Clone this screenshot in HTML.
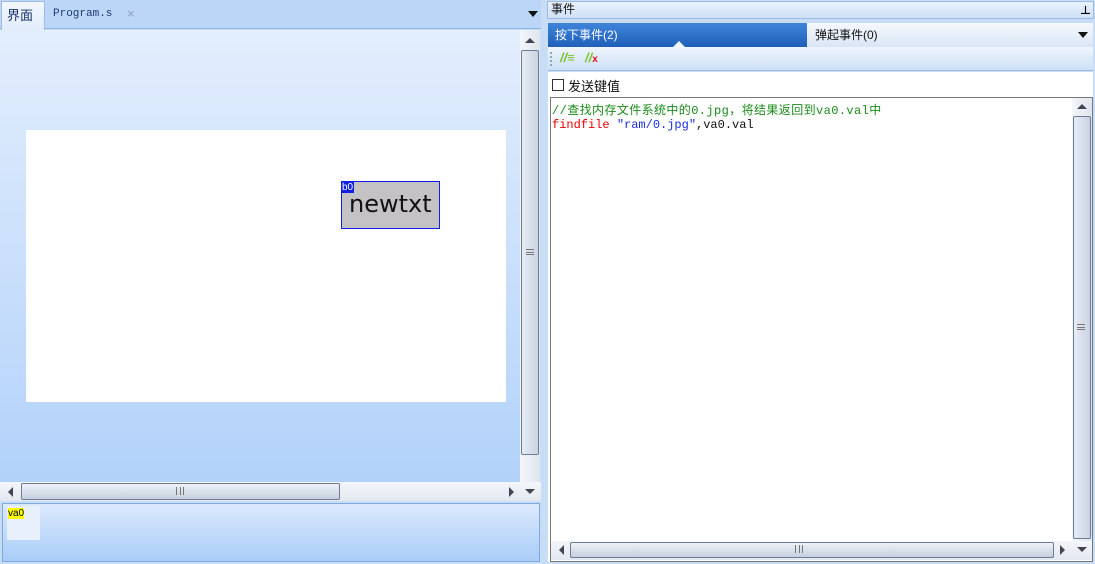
<!DOCTYPE html>
<html><head><meta charset="utf-8"><style>
*{margin:0;padding:0;box-sizing:border-box}
body{width:1095px;height:564px;overflow:hidden;background:#c7dcf5;font-family:"Liberation Sans","Noto Sans CJK SC",sans-serif;font-size:12px;position:relative}
.a{position:absolute}
.sb{background:linear-gradient(90deg,#f4f6fa,#dfe5ee);}
.thumbv{background:linear-gradient(90deg,#e8edf5,#c9d3e2);border:1px solid #6f7c96;border-radius:2px}
.thumbh{background:linear-gradient(#eef2f8,#c5cfdd);border:1px solid #6f7c96;border-radius:2px}
.mono{font-family:"Liberation Mono","Noto Sans CJK SC",monospace;font-size:12px}
</style></head><body>
<div class="a" style="left:0;top:0;width:541px;height:29px;background:#bcd6f8;border-bottom:1px solid #8fb4e0"></div>
<div class="a" style="left:1px;top:1px;width:44px;height:29px;background:linear-gradient(#f2f7fe,#e2edfc);border:1px solid #9ebee6;border-bottom:none;color:#15306a;font-size:13px;padding:3px 0 0 5px">界面</div>
<div class="a mono" style="left:53px;top:8px;color:#1c3a72;font-size:11px">Program.s</div>
<div class="a" style="left:127px;top:6px;color:#8aa0c0;font-size:13px">×</div>
<div class="a" style="left:528px;top:11px;border-left:5px solid transparent;border-right:5px solid transparent;border-top:6px solid #111"></div>
<div class="a" style="left:0;top:30px;width:520px;height:452px;background:linear-gradient(#e3eefd,#b2d2fa)"></div>
<div class="a" style="left:26px;top:130px;width:480px;height:272px;background:#fff"></div>
<div class="a" style="left:341px;top:181px;width:99px;height:48px;background:#c4c2c4;border:1px solid #1020e0"></div>
<div class="a" style="left:342px;top:182px;width:12px;height:11px;background:#1020e0;color:#fff;font-size:10px;line-height:11px">b0</div>
<div class="a" style="left:349px;top:190px;font-family:'DejaVu Sans',sans-serif;font-size:24px;color:#111">newtxt</div>
<div class="a sb" style="left:520px;top:30px;width:20px;height:452px"></div>
<div class="a" style="left:525px;top:38px;border-left:5px solid transparent;border-right:5px solid transparent;border-bottom:5px solid #445"></div>
<div class="a thumbv" style="left:521px;top:50px;width:18px;height:405px"></div>
<div class="a" style="left:526px;top:249px;width:8px;height:6px;border-top:1px solid #777;border-bottom:1px solid #777"></div>
<div class="a" style="left:526px;top:252px;width:8px;height:1px;background:#777"></div>
<div class="a" style="left:0;top:482px;width:541px;height:19px;background:linear-gradient(#f4f6fa,#e3e8f0)"></div>
<div class="a" style="left:8px;top:487px;border-top:5px solid transparent;border-bottom:5px solid transparent;border-right:5px solid #445"></div>
<div class="a thumbh" style="left:21px;top:483px;width:319px;height:17px"></div>
<div class="a" style="left:176px;top:487px;width:8px;height:8px;border-left:1px solid #777;border-right:1px solid #777"></div>
<div class="a" style="left:180px;top:487px;width:1px;height:8px;background:#777"></div>
<div class="a" style="left:509px;top:487px;border-top:5px solid transparent;border-bottom:5px solid transparent;border-left:5px solid #445"></div>
<div class="a" style="left:525px;top:489px;border-left:5px solid transparent;border-right:5px solid transparent;border-top:5px solid #445"></div>
<div class="a" style="left:2px;top:503px;width:538px;height:59px;background:linear-gradient(#dce9fc,#a9cdf8);border:1px solid #7fa8dc"></div>
<div class="a" style="left:7px;top:506px;width:33px;height:34px;background:#e8f0fc"></div>
<div class="a" style="left:8px;top:508px;background:#ff0;font-size:10px;line-height:11px;color:#000">va0</div>
<div class="a" style="left:546px;top:0;width:549px;height:564px;background:#c9ddf6"></div>
<div class="a" style="left:547px;top:1px;width:547px;height:18px;background:linear-gradient(#eaf2fd,#cfe0f7);border:1px solid #9dbbe2;padding:0 0 0 3px;font-size:12px;line-height:15px;color:#111">事件</div>
<div class="a" style="left:1080px;top:2px;font-size:11px;font-weight:bold">⊥</div>
<div class="a" style="left:548px;top:23px;width:259px;height:24px;background:linear-gradient(#3f84da,#1f5fb8);color:#fff;font-size:12px;padding:3px 0 0 7px">按下事件(2)</div>
<div class="a" style="left:673px;top:41px;border-left:6px solid transparent;border-right:6px solid transparent;border-bottom:6px solid #f2f6fc"></div>
<div class="a" style="left:807px;top:23px;width:286px;height:24px;background:linear-gradient(#f6f9fd,#d9e6f6);color:#111;font-size:12px;padding:3px 0 0 8px">弹起事件(0)</div>
<div class="a" style="left:1078px;top:32px;border-left:5px solid transparent;border-right:5px solid transparent;border-top:6px solid #111"></div>
<div class="a" style="left:548px;top:47px;width:545px;height:24px;background:linear-gradient(#f0f5fc,#cde0f8);border-bottom:1px solid #9dbbe2"></div>
<div class="a" style="left:550px;top:52px;width:2px;height:14px;border-left:2px dotted #8aa"></div>
<div class="a" style="left:560px;top:50px;color:#7cbf2a;font-size:13px;font-style:italic;font-weight:bold">//≡</div>
<div class="a" style="left:585px;top:50px;color:#7cbf2a;font-size:13px;font-style:italic;font-weight:bold">//<span style="color:#d11;font-size:10px;font-style:normal">x</span></div>
<div class="a" style="left:548px;top:72px;width:545px;height:490px;background:#fff"></div>
<div class="a" style="left:552px;top:79px;width:12px;height:12px;border:1px solid #333;background:#fff"></div>
<div class="a" style="left:568px;top:76px;font-size:13px;color:#111">发送键值</div>
<div class="a" style="left:550px;top:97px;width:543px;height:465px;border:1px solid #777"></div>
<div class="a mono" style="left:552px;top:101px;color:#1a8a1a;letter-spacing:0.4px">//查找内存文件系统中的0.jpg，将结果返回到va0.val中</div>
<div class="a mono" style="left:552px;top:118px;color:#e00">findfile <span style="color:#1a2ee0">"ram/0.jpg"</span><span style="color:#111">,va0.val</span></div>
<div class="a sb" style="left:1072px;top:98px;width:20px;height:445px"></div>
<div class="a" style="left:1077px;top:104px;border-left:5px solid transparent;border-right:5px solid transparent;border-bottom:5px solid #445"></div>
<div class="a thumbv" style="left:1073px;top:116px;width:18px;height:423px"></div>
<div class="a" style="left:1077px;top:324px;width:8px;height:6px;border-top:1px solid #777;border-bottom:1px solid #777"></div>
<div class="a" style="left:1077px;top:327px;width:8px;height:1px;background:#777"></div>
<div class="a" style="left:551px;top:541px;width:541px;height:19px;background:linear-gradient(#f4f6fa,#e3e8f0)"></div>
<div class="a" style="left:559px;top:545px;border-top:5px solid transparent;border-bottom:5px solid transparent;border-right:5px solid #445"></div>
<div class="a thumbh" style="left:570px;top:542px;width:484px;height:16px"></div>
<div class="a" style="left:795px;top:545px;width:8px;height:8px;border-left:1px solid #777;border-right:1px solid #777"></div>
<div class="a" style="left:799px;top:545px;width:1px;height:8px;background:#777"></div>
<div class="a" style="left:1060px;top:545px;border-top:5px solid transparent;border-bottom:5px solid transparent;border-left:5px solid #445"></div>
<div class="a" style="left:1077px;top:547px;border-left:5px solid transparent;border-right:5px solid transparent;border-top:5px solid #445"></div>
</body></html>
